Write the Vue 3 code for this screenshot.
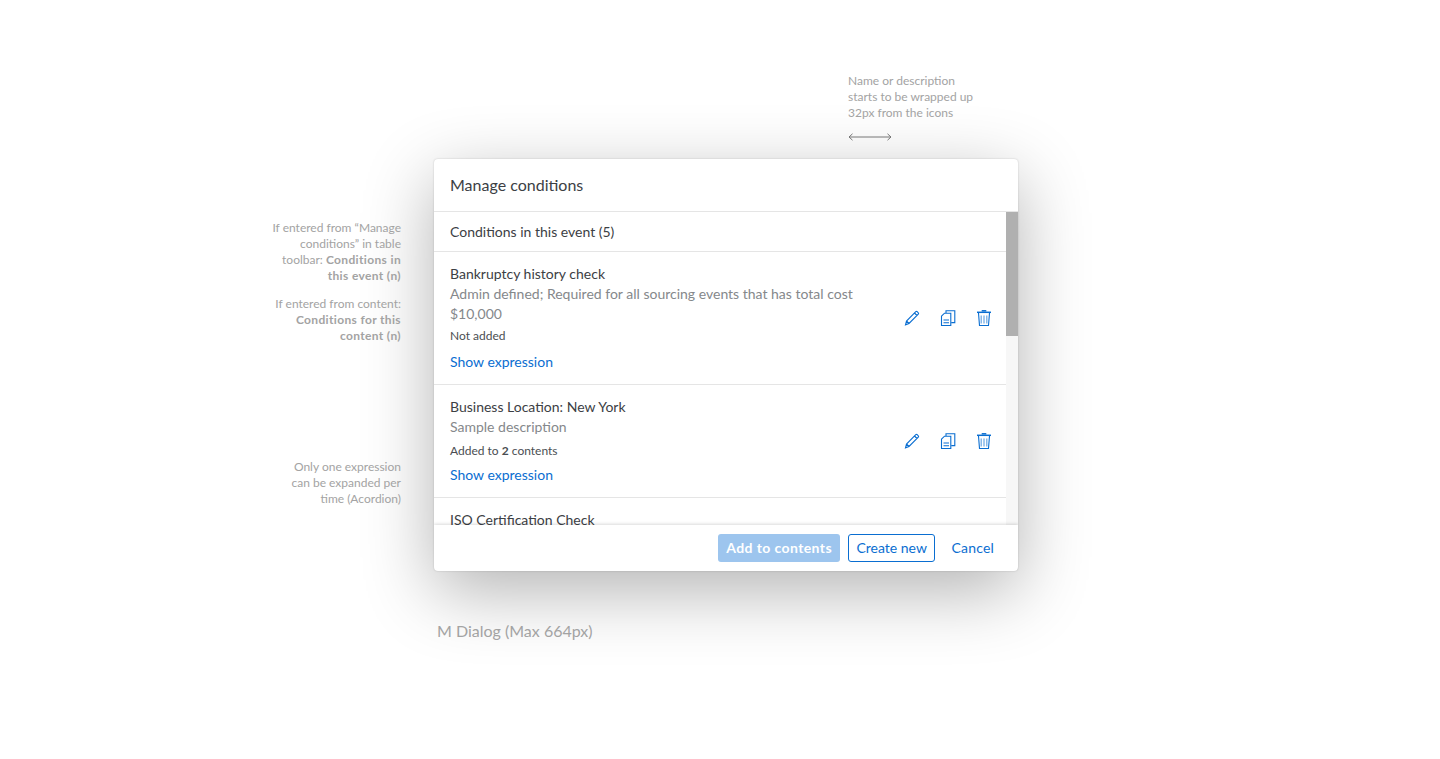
<script setup>
import { ref } from 'vue';

const conditions = ref([
  { name: 'Bankruptcy history check', desc: 'Admin defined; Required for all sourcing events that has total cost $10,000', status: 'Not added' },
  { name: 'Business Location: New York', desc: 'Sample description', status: 'Added to', count: 2 },
  { name: 'ISO Certification Check', desc: 'Sample description', status: 'Not added' },
]);
</script>

<template>
  <main class="page">
    <p class="note top-note">
      Name or description<br>starts to be wrapped up<br>32px from the icons
      <svg class="measure" width="44" height="8" viewBox="0 0 44 8" fill="none" stroke="#777" stroke-width="1">
        <path d="M4.500 .8 1 4l3.500 3.200M1 4h42M39.500 .8 43 4l-3.500 3.200" />
      </svg>
    </p>

    <aside class="side">
      <p class="note first">If entered from “Manage<br>conditions” in table<br>toolbar: <b>Conditions in<br>this event (n)</b></p>
      <p class="note second">If entered from content:<br><b>Conditions for this<br>content (n)</b></p>
      <p class="note third">Only one expression<br>can be expanded per<br>time (Acordion)</p>
    </aside>

    <section class="dialog">
      <header class="dialog-head">Manage conditions</header>
      <div class="body">
        <div class="list">
          <div class="list-title">Conditions in this event (5)</div>
          <div class="row" v-for="item in conditions" :key="item.name">
            <div class="info">
              <div class="name">{{ item.name }}</div>
              <div class="desc">{{ item.desc }}</div>
              <div class="status" :class="{ counted: item.count }">{{ item.status }}<template v-if="item.count">{{ ' ' }}<b>{{ item.count }}</b> contents</template></div>
              <a class="link">Show expression</a>
            </div>
            <div class="icons">
              <svg width="16" height="16" viewBox="0 0 16 16" fill="none" stroke="#0a6ed1" stroke-width="1.100">
                <path d="M1.500 14.800 2.500 11 11.800 1.700a1 1 0 0 1 1.400 0l1.100 1.100a1 1 0 0 1 0 1.400L5 13.500ZM2.500 11 5 13.500M10.500 3 13 5.500" />
              </svg>
              <svg width="16" height="16" viewBox="0 0 16 16" fill="none" stroke="#0a6ed1" stroke-width="1.100">
                <path d="M6 3V.8h8.800V12.600H11.500M1.500 6.200 4.500 3.200H10.800V15.500H1.500ZM3.500 10h5.500M3.500 12.700h5.500" />
              </svg>
              <svg width="16" height="16" viewBox="0 0 16 16" fill="none" stroke="#0a6ed1">
                <path d="M1 2.300h14" stroke-width="1.500" />
                <path d="M5.700 .8h4.600" stroke-width="1.500" />
                <path d="M2.500 3 3.500 15.500h9L13.500 3" stroke-width="1.100" />
                <path d="M5.200 5.500v8M8 5.500v8M10.800 5.500v8" stroke-width="1.200" opacity=".6" />
              </svg>
            </div>
          </div>
        </div>
        <div class="scrollbar"><div class="thumb"></div></div>
      </div>
      <footer class="dialog-foot">
        <button class="btn primary">Add to contents</button>
        <button class="btn outline">Create new</button>
        <button class="btn plain">Cancel</button>
      </footer>
    </section>

    <div class="caption">M Dialog (Max 664px)</div>
  </main>
</template>

<style scoped>
.page {
  display: grid;
  grid-template-columns: 401px 584px;
  grid-template-rows: 159px 412px auto;
  column-gap: 33px;
  height: 759px;
  box-sizing: border-box;
  overflow: hidden;
  background: #fff;
  font-family: Lato, "Open Sans", sans-serif;
}

.note {
  margin: 0;
  font-size: 12px;
  line-height: 16px;
  color: #a3a3a3;
}

.note b {
  font-weight: 700;
  letter-spacing: 0.35px;
}

.top-note {
  grid-column: 2;
  grid-row: 1;
  margin: 73px 0 0 414px;
  width: 160px;
  position: relative;
  z-index: 1;
}

.measure {
  display: block;
  margin-top: 12px;
}

.side {
  grid-column: 1;
  grid-row: 2;
  display: flex;
  flex-direction: column;
  align-items: flex-end;
  position: relative;
  z-index: 1;
}

.side .note {
  text-align: right;
}

.first {
  margin-top: 61px;
}

.second {
  margin-top: 12px;
}

.third {
  margin-top: 115px;
}

.dialog {
  grid-column: 2;
  grid-row: 2;
  display: flex;
  flex-direction: column;
  background: #fff;
  border-radius: 4px;
  box-shadow: 0 20px 70px rgba(0, 0, 0, 0.3), 0 0 2px rgba(0, 0, 0, 0.2);
  overflow: hidden;
  color: #3c4044;
}

.dialog-head {
  height: 53px;
  flex: none;
  box-sizing: border-box;
  display: flex;
  align-items: center;
  padding: 0 0 2px 16px;
  font-size: 16px;
  border-bottom: 1px solid #e5e5e5;
}

.body {
  flex: 1;
  min-height: 0;
  display: flex;
  overflow: hidden;
}

.list {
  flex: 1;
  min-width: 0;
}

.list-title {
  height: 39px;
  display: flex;
  align-items: center;
  padding-left: 16px;
  font-size: 14px;
  border-bottom: 1px solid #e5e5e5;
}

.row {
  display: flex;
  align-items: center;
  justify-content: space-between;
  padding: 12px 4px 12px 16px;
  border-bottom: 1px solid #e5e5e5;
}

.info {
  width: 408px;
}

.name {
  font-size: 14px;
  line-height: 20px;
}

.desc {
  font-size: 14px;
  line-height: 20px;
  color: #85888b;
}

.status {
  font-size: 12px;
  line-height: 24px;
  color: #4a4e52;
}

.status.counted {
  padding-top: 4px;
  line-height: 20px;
}

.link {
  display: block;
  margin-top: 4px;
  font-size: 14px;
  line-height: 20px;
  color: #0a6ed1;
}

.icons {
  display: flex;
  flex: none;
}

.icons svg {
  width: 36px;
}

.scrollbar {
  flex: none;
  width: 12px;
  background: #f7f7f7;
}

.thumb {
  height: 124px;
  background: #b0b0b0;
}

.dialog-foot {
  height: 46px;
  flex: none;
  box-sizing: border-box;
  display: flex;
  align-items: center;
  justify-content: flex-end;
  gap: 8px;
  padding: 0 15px 1px 0;
  box-shadow: 0 -1px 3px rgba(0, 0, 0, 0.15);
  position: relative;
}

.btn {
  height: 28px;
  padding: 0 8px;
  border: 1px solid transparent;
  border-radius: 3px;
  background: none;
  color: #0a6ed1;
  font: 14px Lato, "Open Sans", sans-serif;
}

.primary {
  padding: 0 7px;
  background: #9dc5ee;
  color: #fff;
  font-weight: 700;
  letter-spacing: 0.4px;
}

.outline {
  padding: 0 7.5px;
  border-color: #0a6ed1;
}

.plain {
  margin-left: -1px;
  letter-spacing: 0.2px;
}

.caption {
  grid-column: 2;
  grid-row: 3;
  margin: 50px 0 0 3px;
  font-size: 16px;
  line-height: 20px;
  color: #a3a3a3;
  position: relative;
}
</style>
